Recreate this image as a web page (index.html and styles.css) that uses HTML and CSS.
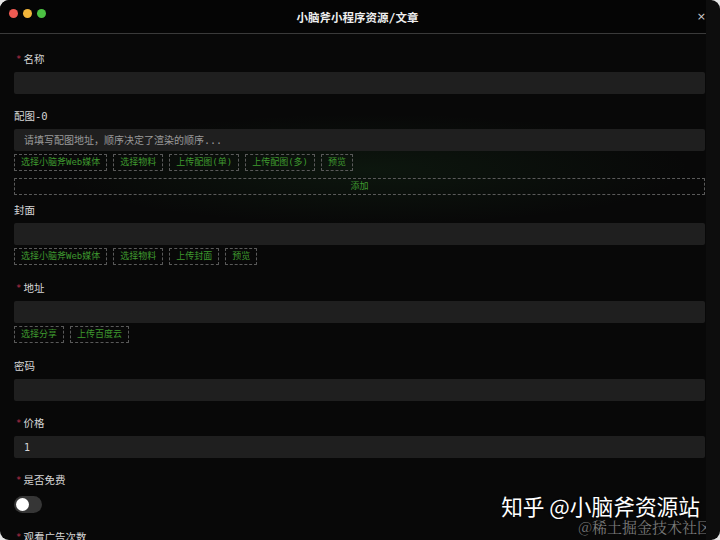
FILE: index.html
```html
<!DOCTYPE html>
<html lang="zh-CN">
<head>
    <meta charset="UTF-8">
    <meta name="viewport" content="width=device-width, initial-scale=1.0">
    <title>小脑斧小程序资源/文章</title>
    <link rel="stylesheet" href="styles.css">
</head>
<body>
    <div class="window">
        <div class="titlebar">
            <div class="lights">
                <span class="light red"></span>
                <span class="light yellow"></span>
                <span class="light green"></span>
            </div>
            <div class="title">小脑斧小程序资源/文章</div>
            <div class="close">×</div>
        </div>

        <form class="form">
            <div class="field">
                <label class="label"><span class="req">*</span>名称</label>
                <input class="input" type="text">
            </div>

            <div class="field field-array">
                <label class="label">配图-0</label>
                <input class="input" type="text" placeholder="请填写配图地址，顺序决定了渲染的顺序...">
                <div class="btn-row">
                    <button type="button" class="btn">选择小脑斧Web媒体</button>
                    <button type="button" class="btn">选择物料</button>
                    <button type="button" class="btn">上传配图(单)</button>
                    <button type="button" class="btn">上传配图(多)</button>
                    <button type="button" class="btn">预览</button>
                </div>
                <button type="button" class="btn btn-add">添加</button>
            </div>

            <div class="field field-btns">
                <label class="label">封面</label>
                <input class="input" type="text">
                <div class="btn-row">
                    <button type="button" class="btn">选择小脑斧Web媒体</button>
                    <button type="button" class="btn">选择物料</button>
                    <button type="button" class="btn">上传封面</button>
                    <button type="button" class="btn">预览</button>
                </div>
            </div>

            <div class="field field-btns">
                <label class="label"><span class="req">*</span>地址</label>
                <input class="input" type="text">
                <div class="btn-row">
                    <button type="button" class="btn">选择分享</button>
                    <button type="button" class="btn">上传百度云</button>
                </div>
            </div>

            <div class="field">
                <label class="label">密码</label>
                <input class="input" type="text">
            </div>

            <div class="field">
                <label class="label"><span class="req">*</span>价格</label>
                <input class="input" type="text" value="1">
            </div>

            <div class="field field-toggle">
                <label class="label label-toggle"><span class="req">*</span>是否免费</label>
                <span class="toggle"><span class="knob"></span></span>
            </div>

            <div class="field">
                <label class="label"><span class="req">*</span>观看广告次数</label>
                <input class="input" type="text">
            </div>
        </form>

        <div class="watermark">
            <div class="wm-main">知乎 @小脑斧资源站</div>
            <div class="wm-sub">@稀土掘金技术社区</div>
        </div>
    </div>
</body>
</html>
```

FILE: styles.css
```css
* {
    box-sizing: border-box;
}
html, body {
    margin: 0;
    height: 100%;
    overflow: hidden;
}
body {
    background-color: #e6e6e6;
    font-family: "DejaVu Sans Mono", "Noto Sans CJK SC", monospace;
}
.window {
    position: relative;
    height: 540px;
    background-color: #080808;
    border-radius: 9px;
    overflow: hidden;
    border-right: 14px solid #0d0d0d;
}
.titlebar {
    height: 34px;
    display: flex;
    align-items: center;
    justify-content: space-between;
    padding: 0 14px 0 9px;
    border-bottom: 1px solid #3a3a3a;
    background-color: #050505;
    margin-right: -14px;
}
.lights {
    display: flex;
    gap: 5px;
    width: 60px;
    margin-top: -6px;
}
.light {
    width: 9px;
    height: 9px;
    border-radius: 50%;
}
.red { background-color: #ee5a52; }
.yellow { background-color: #f2b53a; }
.green { background-color: #4cc243; }
.title {
    color: #eeeeee;
    font-size: 11.5px;
    font-weight: bold;
}
.close {
    width: 60px;
    text-align: right;
    color: #cccccc;
    font-family: "DejaVu Sans", sans-serif;
    font-size: 11px;
}
.form {
    padding: 18px 1px 0 14px;
    background-image: radial-gradient(ellipse 320px 55px at 370px 135px, rgba(40, 110, 50, 0.14), rgba(40, 110, 50, 0) 100%);
}
.field {
    margin-bottom: 15px;
}
.field-btns {
    margin-bottom: 16px;
}
.field-array {
    margin-bottom: 8px;
}
.field-toggle {
    margin-bottom: 17px;
}
.label {
    display: block;
    height: 14px;
    line-height: 14px;
    margin-bottom: 6px;
    color: #d6d6d6;
    font-size: 10.5px;
}
.label-toggle {
    margin-bottom: 9px;
}
.req {
    color: #b8304c;
    font-size: 9px;
    margin: 0 2px 0 2px;
    vertical-align: 1px;
}
.input {
    display: block;
    width: 100%;
    height: 22px;
    border: none;
    border-radius: 2px;
    background-color: #1f1f1f;
    color: #d6d6d6;
    padding: 0 10px;
    font-family: inherit;
    font-size: 10px;
    outline: none;
}
.input::placeholder {
    color: #9a9a9a;
}
.btn-row {
    display: flex;
    gap: 6px;
    margin-top: 3px;
}
.btn {
    height: 17px;
    padding: 0 6px;
    background: transparent;
    border: 1px dashed #5a5a5a;
    border-radius: 1px;
    color: #3f9a2f;
    font-family: inherit;
    font-size: 9px;
    line-height: 15px;
    cursor: pointer;
}
.btn-add {
    display: block;
    width: 100%;
    margin-top: 7px;
}
.toggle {
    display: block;
    width: 28px;
    height: 17px;
    border-radius: 9px;
    background-color: #363636;
    padding: 2px;
}
.knob {
    display: block;
    width: 13px;
    height: 13px;
    border-radius: 50%;
    background-color: #ffffff;
}
.watermark {
    position: absolute;
    right: 0;
    top: 492px;
    text-align: right;
}
.wm-main {
    color: #ffffff;
    font-family: "Noto Sans CJK SC", sans-serif;
    font-size: 21.7px;
    line-height: 27px;
    margin-right: 6px;
    text-shadow: 0 0 2px #000;
}
.wm-sub {
    color: #7a7a7a;
    font-family: "Noto Serif CJK SC", "Noto Sans CJK SC", serif;
    font-size: 15px;
    line-height: 16px;
    margin-right: -6px;
}
```
